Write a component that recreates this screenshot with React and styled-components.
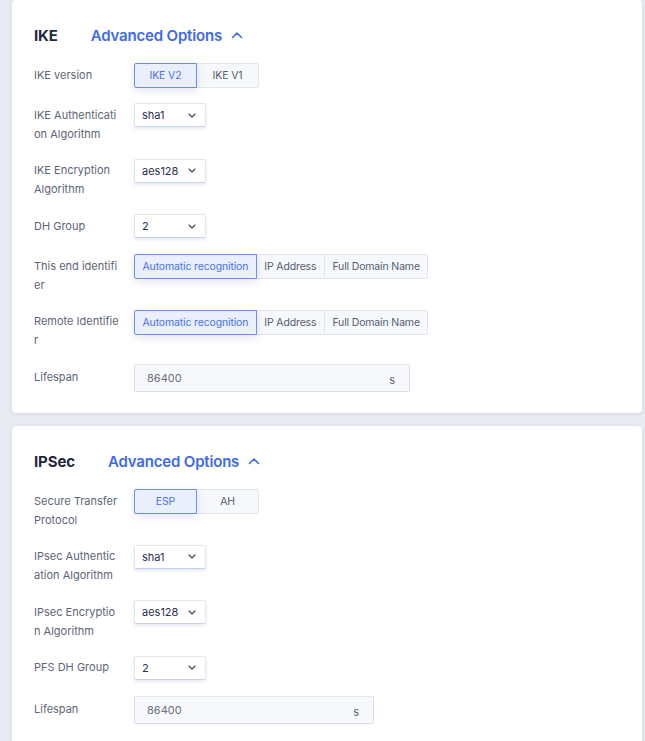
import React from 'react';
import styled, { createGlobalStyle } from 'styled-components';

const GlobalStyle = createGlobalStyle`
  body {
    margin: 0;
    background: #e9ebf3;
    font-family: Inter, "Noto Sans", sans-serif;
  }
`;

const Page = styled.div`
  padding: 0 3px 0 12px;
  display: flex;
  flex-direction: column;
  gap: 13px;
  height: 741px;
  overflow: hidden;
`;

const Card = styled.div`
  background: #fff;
  border-radius: 4px;
  box-shadow: 0 1px 4px rgba(40, 50, 90, 0.12);
  padding: 25px 22px 6px 22px;
  flex-shrink: 0;
`;

const Header = styled.div`
  display: flex;
  align-items: center;
  gap: 33px;
  height: 20px;
  margin-bottom: 18px;
`;

const Title = styled.div`
  font-size: 15px;
  font-weight: 700;
  letter-spacing: -0.1px;
  color: #1e2740;
`;

const Toggle = styled.div`
  display: flex;
  align-items: center;
  gap: 9px;
  font-size: 15px;
  font-weight: 600;
  letter-spacing: -0.18px;
  color: #3e6ae8;
`;

const Row = styled.div`
  display: flex;
  align-items: flex-start;
  margin-top: ${p => (p.$pull ? -1 : 0)}px;
  margin-bottom: 15px;
`;

const Label = styled.div`
  width: 86px;
  margin-right: 14px;
  padding-top: ${p => (p.$tall ? '4px' : '2.5px')};
  font-size: 11px;
  line-height: 19px;
  color: #5d6578;
  word-break: break-all;
`;

const Segmented = styled.div`
  display: flex;
  height: 25px;
`;

const Segment = styled.div`
  box-sizing: border-box;
  height: 25px;
  min-width: ${p => p.$min || 0}px;
  padding: 0 7.5px;
  display: flex;
  align-items: center;
  justify-content: center;
  font-size: 10.5px;
  letter-spacing: -0.15px;
  color: ${p => (p.$active ? '#4a72e8' : '#555e70')};
  background: ${p => (p.$active ? '#eaeffd' : '#f7f8fb')};
  border: 1px solid ${p => (p.$active ? '#6b8ff0' : '#e2e5ee')};
  margin-left: ${p => (p.$first ? 0 : -1)}px;
  border-radius: ${p => (p.$first ? '2px 0 0 2px' : p.$last ? '0 2px 2px 0' : '0')};
  box-shadow: ${p => (p.$active ? '0 3px 8px rgba(60, 80, 140, 0.14)' : 'none')};
  position: relative;
  z-index: ${p => (p.$active ? 1 : 0)};
`;

const Select = styled.div`
  box-sizing: border-box;
  width: 72px;
  height: 24px;
  margin-bottom: 1px;
  padding: 0 9px 0 7px;
  display: flex;
  align-items: center;
  justify-content: space-between;
  background: #fff;
  border: 1px solid #e3e6ef;
  border-bottom-color: #c8d0ea;
  border-radius: 2px;
  box-shadow: 0 2px 3px rgba(70, 90, 160, 0.12);
  font-size: 11px;
  color: #27304d;
`;

const Input = styled.div`
  box-sizing: border-box;
  width: ${p => p.$width}px;
  height: 28px;
  padding: 0 14px 0 12px;
  display: flex;
  align-items: center;
  justify-content: space-between;
  background: #f7f8fb;
  border: 1px solid #dadde8;
  border-top-color: #e6e8ef;
  border-radius: 2px;
  font-size: 11px;
  color: #6b7080;
`;

const Unit = styled.span`
  padding-top: 4px;
  color: #5d6578;
`;

const ChevronUp = () => (
  <svg width="12" height="8" viewBox="0 0 12 8" fill="none">
    <path d="M1.5 6.5L6 2L10.5 6.5" stroke="#3e6ae8" strokeWidth="1.6" strokeLinecap="round" strokeLinejoin="round" />
  </svg>
);

const ChevronDown = () => (
  <svg width="8" height="5" viewBox="0 0 8 5" fill="none">
    <path d="M1 1L4 4L7 1" stroke="#3a4258" strokeWidth="1.1" strokeLinecap="round" strokeLinejoin="round" />
  </svg>
);

const SegmentGroup = ({ options, min }) => (
  <Segmented>
    {options.map((o, i) => (
      <Segment
        key={o}
        $active={i === 0}
        $first={i === 0}
        $last={i === options.length - 1}
        $min={min}
      >
        {o}
      </Segment>
    ))}
  </Segmented>
);

const Dropdown = ({ value }) => (
  <Select>
    <span>{value}</span>
    <ChevronDown />
  </Select>
);

const Field = ({ label, tall, pull, children }) => (
  <Row $pull={pull}>
    <Label $tall={tall}>{label}</Label>
    {children}
  </Row>
);

const identifiers = ['Automatic recognition', 'IP Address', 'Full Domain Name'];

const App = () => (
  <>
    <GlobalStyle />
    <Page>
      <Card>
        <Header>
          <Title>IKE</Title>
          <Toggle>Advanced Options <ChevronUp /></Toggle>
        </Header>
        <Field label="IKE version">
          <SegmentGroup options={['IKE V2', 'IKE V1']} min={63} />
        </Field>
        <Field label="IKE Authentication Algorithm">
          <Dropdown value="sha1" />
        </Field>
        <Field label="IKE Encryption Algorithm">
          <Dropdown value="aes128" />
        </Field>
        <Field label="DH Group">
          <Dropdown value="2" />
        </Field>
        <Field label="This end identifier">
          <SegmentGroup options={identifiers} />
        </Field>
        <Field label="Remote Identifier">
          <SegmentGroup options={identifiers} />
        </Field>
        <Field label="Lifespan" tall pull>
          <Input $width={276}>
            <span>86400</span>
            <Unit>s</Unit>
          </Input>
        </Field>
      </Card>
      <Card>
        <Header>
          <Title>IPSec</Title>
          <Toggle>Advanced Options <ChevronUp /></Toggle>
        </Header>
        <Field label="Secure Transfer Protocol">
          <SegmentGroup options={['ESP', 'AH']} min={63} />
        </Field>
        <Field label="IPsec Authentication Algorithm">
          <Dropdown value="sha1" />
        </Field>
        <Field label="IPsec Encryption Algorithm">
          <Dropdown value="aes128" />
        </Field>
        <Field label="PFS DH Group">
          <Dropdown value="2" />
        </Field>
        <Field label="Lifespan" tall>
          <Input $width={240}>
            <span>86400</span>
            <Unit>s</Unit>
          </Input>
        </Field>
      </Card>
    </Page>
  </>
);

export default App;
